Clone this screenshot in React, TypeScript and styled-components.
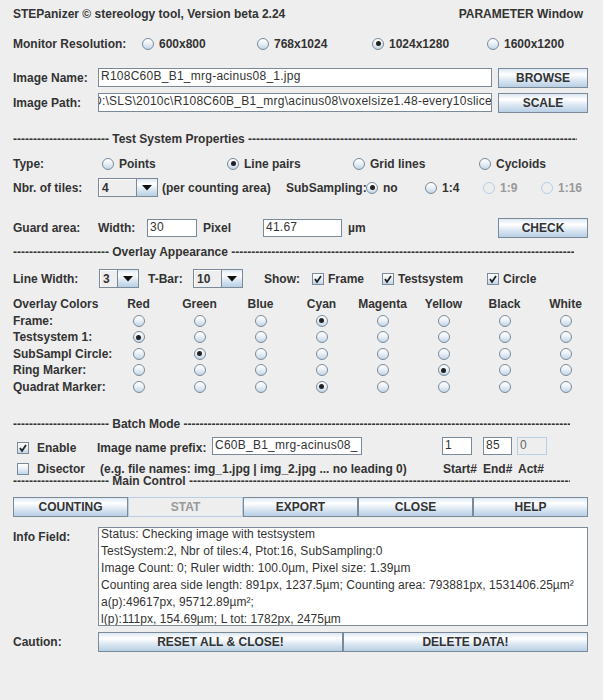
import React from "react";
import styled, { createGlobalStyle, css } from "styled-components";

const GlobalStyle = createGlobalStyle`
  body {
    margin: 0;
    background: #ffffff;
  }
`;

const Window = styled.div`
  width: 603px;
  min-height: 700px;
  box-sizing: border-box;
  padding-left: 13px;
  background: #eeeeee;
  display: flex;
  flex-direction: column;
  font: bold 12px "Liberation Sans", Arial, sans-serif;
  color: #333333;
`;

const Row = styled.div<{ $top: number; $h: number; $w?: number; $spread?: boolean }>`
  display: flex;
  align-items: center;
  flex-shrink: 0;
  white-space: nowrap;
  height: ${(p) => p.$h}px;
  margin-top: ${(p) => p.$top}px;
  ${(p) => p.$w && `width: ${p.$w}px;`}
  ${(p) => p.$spread && `justify-content: space-between;`}
`;

const Cell = styled.div<{ $w?: number; $pad?: number; $drop?: number }>`
  display: flex;
  align-items: center;
  flex-shrink: 0;
  ${(p) => p.$w && `width: ${p.$w}px;`}
  padding-left: ${(p) => p.$pad ?? 0}px;
  padding-top: ${(p) => p.$drop ?? 0}px;
  box-sizing: border-box;
`;

const Divider = styled.div<{ $w: number; $top: number; $h?: number }>`
  width: ${(p) => p.$w}px;
  height: ${(p) => p.$h ?? 16}px;
  line-height: ${(p) => p.$h ?? 16}px;
  margin-top: ${(p) => p.$top}px;
  overflow: hidden;
  white-space: nowrap;
  flex-shrink: 0;
`;

const oceanGradient = css`
  background: linear-gradient(
    to bottom,
    #dde8f3 0%,
    #ffffff 30%,
    #dde8f3 60%,
    #b8cfe5 100%
  );
`;

const Button = styled.button<{ $w?: number; $off?: boolean }>`
  height: 20px;
  ${(p) => p.$w && `width: ${p.$w}px;`}
  padding: 0;
  margin: 0;
  box-sizing: border-box;
  font: bold 12px "Liberation Sans", Arial, sans-serif;
  color: ${(p) => (p.$off ? "#999999" : "#333333")};
  border: 1px solid ${(p) => (p.$off ? "#b8cfe5" : "#7a8a99")};
  ${(p) => (p.$off ? `background: #eeeeee;` : oceanGradient)}
  flex-shrink: 0;
`;

const ButtonStrip = styled.div<{ $cols: number; $w: number; $top: number }>`
  display: grid;
  grid-template-columns: repeat(${(p) => p.$cols}, 1fr);
  width: ${(p) => p.$w}px;
  margin-top: ${(p) => p.$top}px;
  flex-shrink: 0;
`;

const TextField = styled.div<{ $w: number; $h?: number; $off?: boolean; $indent?: number }>`
  width: ${(p) => p.$w}px;
  height: ${(p) => p.$h ?? 19}px;
  line-height: ${(p) => (p.$h ?? 19) - 2}px;
  box-sizing: border-box;
  padding: 0 2px;
  overflow: hidden;
  white-space: nowrap;
  flex-shrink: 0;
  font: 12px "Liberation Sans", Arial, sans-serif;
  letter-spacing: 0.25px;
  text-indent: ${(p) => p.$indent ?? 0}px;
  color: ${(p) => (p.$off ? "#666666" : "#333333")};
  background: ${(p) => (p.$off ? "#eeeeee" : "#ffffff")};
  border: 1px solid ${(p) => (p.$off ? "#b8cfe5" : "#7a8a99")};
`;

const ComboBox = styled.div<{ $w: number }>`
  width: ${(p) => p.$w}px;
  height: 19px;
  box-sizing: border-box;
  border: 1px solid #7a8a99;
  display: flex;
  flex-shrink: 0;
  background: #eeeeee;
`;

const ComboValue = styled.div`
  flex: 1;
  display: flex;
  align-items: center;
  padding-left: 3px;
  box-shadow: inset 1px 1px 0 #ffffff;
`;

const ComboArrow = styled.div`
  width: 20px;
  border-left: 1px solid #7a8a99;
  display: flex;
  align-items: center;
  justify-content: center;
  ${oceanGradient}
`;

const RadioMark = styled.span<{ $on?: boolean; $off?: boolean }>`
  width: 12px;
  height: 12px;
  box-sizing: border-box;
  border-radius: 50%;
  border: 1px solid ${(p) => (p.$off ? "#b8cfe5" : "#7a8a99")};
  background: ${(p) =>
    p.$off ? "#eeeeee" : "linear-gradient(to bottom, #ffffff 0%, #eef3f8 40%, #c3d5e8 100%)"};
  display: inline-flex;
  align-items: center;
  justify-content: center;
  flex-shrink: 0;
  &::after {
    content: "";
    display: ${(p) => (p.$on ? "block" : "none")};
    width: 5px;
    height: 5px;
    border-radius: 50%;
    background: #222222;
  }
`;

const Option = styled.span<{ $gap?: number; $off?: boolean }>`
  display: inline-flex;
  align-items: center;
  gap: ${(p) => p.$gap ?? 5}px;
  color: ${(p) => (p.$off ? "#999999" : "#333333")};
`;

const CheckMark = styled.span`
  width: 12px;
  height: 12px;
  box-sizing: border-box;
  border: 1px solid #7a8a99;
  background: linear-gradient(to bottom, #ffffff 0%, #eef3f8 40%, #c3d5e8 100%);
  display: inline-flex;
  flex-shrink: 0;
`;

const ColorGrid = styled.div`
  display: grid;
  grid-template-columns: 95px repeat(8, 61px);
  grid-auto-rows: 16.5px;
  margin-top: 7.75px;
  flex-shrink: 0;
  white-space: nowrap;
`;

const GridHead = styled.div`
  display: flex;
  align-items: center;
  justify-content: center;
`;

const GridLabel = styled.div`
  display: flex;
  align-items: center;
`;

const InfoArea = styled.div`
  width: 490px;
  height: 99px;
  box-sizing: border-box;
  border: 1px solid #7a8a99;
  background: #ffffff;
  padding: 0 2px;
  overflow: hidden;
  font: 12px "Liberation Sans", Arial, sans-serif;
  letter-spacing: 0.05px;
  line-height: 17px;
  color: #333333;
  white-space: nowrap;
`;

const InfoText = styled.div`
  margin-top: -2px;
`;

const TopLabel = styled.div<{ $w: number; $pad: number }>`
  width: ${(p) => p.$w}px;
  padding-top: ${(p) => p.$pad}px;
  flex-shrink: 0;
  line-height: 15px;
`;

const TopRow = styled.div<{ $top: number }>`
  display: flex;
  align-items: flex-start;
  margin-top: ${(p) => p.$top}px;
  flex-shrink: 0;
`;

function Radio({ label, on, off, gap }: { label?: string; on?: boolean; off?: boolean; gap?: number }) {
  return (
    <Option $gap={gap} $off={off}>
      <RadioMark $on={on} $off={off} />
      {label}
    </Option>
  );
}

function Check({ label, on, gap }: { label: string; on?: boolean; gap?: number }) {
  return (
    <Option $gap={gap ?? 4}>
      <CheckMark>
        {on && (
          <svg width="10" height="10" viewBox="0 0 10 10">
            <polyline points="2,5 4,8 8,2" fill="none" stroke="#222" strokeWidth="1.8" />
          </svg>
        )}
      </CheckMark>
      {label}
    </Option>
  );
}

function Combo({ value, w }: { value: string; w: number }) {
  return (
    <ComboBox $w={w}>
      <ComboValue>{value}</ComboValue>
      <ComboArrow>
        <svg width="10" height="6" viewBox="0 0 10 6">
          <polygon points="0,0 10,0 5,5.5" fill="#111" />
        </svg>
      </ComboArrow>
    </ComboBox>
  );
}

function Section({ title, w, top, h }: { title: string; w: number; top: number; h?: number }) {
  return (
    <Divider $w={w} $top={top} $h={h}>
      {"-".repeat(24) + " " + title + " " + "-".repeat(160)}
    </Divider>
  );
}

const colorNames = ["Red", "Green", "Blue", "Cyan", "Magenta", "Yellow", "Black", "White"];
const colorRows: { label: string; pick: number[] }[] = [
  { label: "Frame:", pick: [3] },
  { label: "Testsystem 1:", pick: [0] },
  { label: "SubSampl Circle:", pick: [1] },
  { label: "Ring Marker:", pick: [5] },
  { label: "Quadrat Marker:", pick: [3] },
];

const infoLines = [
  "Status: Checking image with testsystem",
  "TestSystem:2, Nbr of tiles:4, Ptot:16, SubSampling:0",
  "Image Count: 0;  Ruler width: 100.0µm,  Pixel size: 1.39µm",
  "Counting area side length: 891px, 1237.5µm; Counting area: 793881px, 1531406.25µm²",
  "a(p):49617px, 95712.89µm²;",
  "l(p):111px, 154.69µm;  L tot: 1782px, 2475µm",
];

export default function App() {
  return (
    <>
      <GlobalStyle />
      <Window>
        <Row $top={5} $h={18} $w={570} $spread>
          <span>STEPanizer © stereology tool, Version beta 2.24</span>
          <span>PARAMETER Window</span>
        </Row>

        <Row $top={11} $h={19}>
          <Cell $w={129}>Monitor Resolution:</Cell>
          <Cell $w={115}>
            <Radio label="600x800" />
          </Cell>
          <Cell $w={115}>
            <Radio label="768x1024" />
          </Cell>
          <Cell $w={115}>
            <Radio label="1024x1280" on />
          </Cell>
          <Cell>
            <Radio label="1600x1200" />
          </Cell>
        </Row>

        <Row $top={15} $h={19}>
          <Cell $w={85}>Image Name:</Cell>
          <TextField $w={394}>R108C60B_B1_mrg-acinus08_1.jpg</TextField>
          <Cell $w={6} />
          <Button $w={90}>BROWSE</Button>
        </Row>

        <Row $top={6} $h={19}>
          <Cell $w={85}>Image Path:</Cell>
          <TextField $w={394} $indent={-8}>
            {"D:\\SLS\\2010c\\R108C60B_B1_mrg\\acinus08\\voxelsize1.48-every10slice\\"}
          </TextField>
          <Cell $w={6} />
          <Button $w={90}>SCALE</Button>
        </Row>

        <Section title="Test System Properties" w={564} top={19} />

        <Row $top={7} $h={19}>
          <Cell $w={89}>Type:</Cell>
          <Cell $w={125}>
            <Radio label="Points" />
          </Cell>
          <Cell $w={126}>
            <Radio label="Line pairs" on />
          </Cell>
          <Cell $w={126}>
            <Radio label="Grid lines" />
          </Cell>
          <Cell>
            <Radio label="Cycloids" />
          </Cell>
        </Row>

        <Row $top={5} $h={19}>
          <Cell $w={85}>Nbr. of tiles:</Cell>
          <Combo value="4" w={60} />
          <Cell $w={128} $pad={4}>
            (per counting area)
          </Cell>
          <Cell $w={80}>SubSampling:</Cell>
          <Cell $w={59}>
            <Radio label="no" on />
          </Cell>
          <Cell $w={58}>
            <Radio label="1:4" />
          </Cell>
          <Cell $w={58}>
            <Radio label="1:9" off />
          </Cell>
          <Cell>
            <Radio label="1:16" off />
          </Cell>
        </Row>

        <Row $top={21} $h={20}>
          <Cell $w={85}>Guard area:</Cell>
          <Cell $w={49}>Width:</Cell>
          <TextField $w={50} $h={18}>
            30
          </TextField>
          <Cell $w={66} $pad={6}>
            Pixel
          </Cell>
          <TextField $w={79} $h={18}>
            41.67
          </TextField>
          <Cell $w={156} $pad={6}>
            µm
          </Cell>
          <Button $w={90}>CHECK</Button>
        </Row>

        <Section title="Overlay Appearance" w={561} top={6} />

        <Row $top={9} $h={19}>
          <Cell $w={86}>Line Width:</Cell>
          <Combo value="3" w={40} />
          <Cell $w={54} $pad={9}>
            T-Bar:
          </Cell>
          <Combo value="10" w={50} />
          <Cell $w={69} $pad={21}>
            Show:
          </Cell>
          <Cell $w={70}>
            <Check label="Frame" on />
          </Cell>
          <Cell $w={105}>
            <Check label="Testsystem" on />
          </Cell>
          <Cell>
            <Check label="Circle" on />
          </Cell>
        </Row>

        <ColorGrid>
          <GridLabel>Overlay Colors</GridLabel>
          {colorNames.map((c) => (
            <GridHead key={c}>{c}</GridHead>
          ))}
          {colorRows.map((r) => (
            <React.Fragment key={r.label}>
              <GridLabel>{r.label}</GridLabel>
              {colorNames.map((c, i) => (
                <GridHead key={c}>
                  <RadioMark $on={r.pick.includes(i)} />
                </GridHead>
              ))}
            </React.Fragment>
          ))}
        </ColorGrid>

        <Section title="Batch Mode" w={557} top={21.25} />

        <Row $top={5} $h={18}>
          <Cell $w={84} $pad={4} $drop={3}>
            <Check label="Enable" on gap={8} />
          </Cell>
          <Cell $w={115} $drop={3}>
            Image name prefix:
          </Cell>
          <TextField $w={150} $h={18}>
            C60B_B1_mrg-acinus08_
          </TextField>
          <Cell $w={80} />
          <TextField $w={30} $h={18}>
            1
          </TextField>
          <Cell $w={11} />
          <TextField $w={29} $h={18}>
            85
          </TextField>
          <Cell $w={5} />
          <TextField $w={30} $h={18} $off>
            0
          </TextField>
        </Row>

        <Row $top={6} $h={15}>
          <Cell $w={87} $pad={4}>
            <Check label="Disector" gap={8} />
          </Cell>
          <Cell $w={343}>(e.g. file names: img_1.jpg | img_2.jpg ... no leading 0)</Cell>
          <Cell $w={40}>Start#</Cell>
          <Cell $w={35}>End#</Cell>
          <Cell>Act#</Cell>
        </Row>

        <Section title="Main Control" w={557} top={0} h={10} />

        <ButtonStrip $cols={5} $w={575} $top={11}>
          <Button>COUNTING</Button>
          <Button $off>STAT</Button>
          <Button>EXPORT</Button>
          <Button>CLOSE</Button>
          <Button>HELP</Button>
        </ButtonStrip>

        <TopRow $top={10}>
          <TopLabel $w={85} $pad={3}>
            Info Field:
          </TopLabel>
          <InfoArea>
            <InfoText>
              {infoLines.map((l) => (
                <div key={l}>{l}</div>
              ))}
            </InfoText>
          </InfoArea>
        </TopRow>

        <Row $top={6} $h={20}>
          <Cell $w={85}>Caution:</Cell>
          <ButtonStrip $cols={2} $w={490} $top={0}>
            <Button>RESET ALL &amp; CLOSE!</Button>
            <Button>DELETE DATA!</Button>
          </ButtonStrip>
        </Row>
      </Window>
    </>
  );
}
